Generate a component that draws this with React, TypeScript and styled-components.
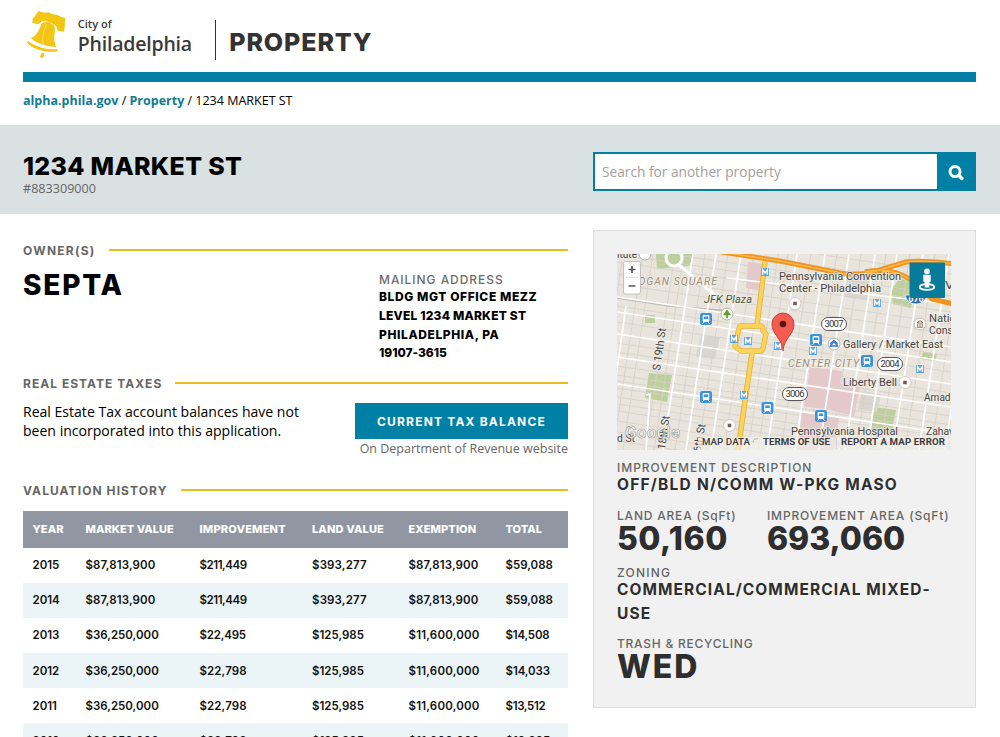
import React from "react";
import styled, { createGlobalStyle } from "styled-components";

const GlobalStyle = createGlobalStyle`
  * { box-sizing: border-box; }
  body { margin: 0; background: #fff; color: #000; font-family: "Open Sans", sans-serif; }
  h1, h2, p { margin: 0; }
`;

const heading = `font-family: Inter, sans-serif; font-weight: 700; white-space: nowrap;`;

const Page = styled.div`
  width: 1000px;
  height: 737px;
  overflow: hidden;
`;
const Header = styled.header`
  margin: 0 24.5px 0 23px;
  height: 125px;
`;
const Brand = styled.div`
  height: 72px;
  display: flex;
  align-items: flex-start;
  padding: 10px 0 0 3px;
`;
const CityName = styled.div`
  margin: 6px 0 0 11px;
  width: 137px;
  color: #3a3a3a;
  font-weight: 600;
  white-space: nowrap;
`;
const CitySmall = styled.div`
  font-size: 11px;
  line-height: 16px;
  letter-spacing: 0.05px;
`;
const CityLarge = styled.div`
  font-size: 19.5px;
  line-height: 24px;
  letter-spacing: -0.2px;
`;
const AppTitle = styled.div`
  ${heading}
  margin-top: 9.5px;
  height: 40px;
  border-left: 1px solid #333;
  padding-left: 13.5px;
  font-size: 25px;
  font-weight: 800;
  line-height: 44px;
  letter-spacing: 0.9px;
  color: #333;
`;
const Bar = styled.div`
  height: 10px;
  background: #0080a5;
`;
const Crumbs = styled.nav`
  font-size: 12.5px;
  line-height: 16px;
  padding-top: 11px;
  white-space: nowrap;
`;
const CrumbLink = styled.a`
  color: #0f7b93;
  font-weight: 700;
`;
const Band = styled.section`
  height: 89px;
  background: #dae1e3;
  border-top: 1px solid #d5d9da;
  padding: 26px 24.5px 0 23px;
  display: flex;
  justify-content: space-between;
`;
const Address = styled.h1`
  ${heading}
  margin-top: -1px;
  font-size: 25px;
  line-height: 31px;
  font-weight: 800;
  letter-spacing: 0.3px;
`;
const Account = styled.div`
  color: #666;
  font-size: 12.6px;
  line-height: 14px;
`;
const Search = styled.form`
  display: flex;
  width: 382.5px;
  height: 39px;
`;
const Input = styled.input`
  flex: 1;
  min-width: 0;
  border: 2px solid #0080a5;
  background: #fff;
  padding: 0 7px;
  font: 13.7px "Open Sans", sans-serif;
  outline: 0;
  &::placeholder { color: #a0a0a0; opacity: 1; }
`;
const SearchButton = styled.button`
  display: flex;
  align-items: center;
  width: 37px;
  border: 0;
  padding: 2px 0 0 8px;
  background: #0080a5;
`;
const Content = styled.main`
  display: grid;
  grid-template-columns: 545px 382.5px;
  justify-content: space-between;
  padding: 16px 24.5px 0 23px;
`;
const SectionTitle = styled.h2<{ $ls: number }>`
  ${heading}
  display: flex;
  align-items: center;
  gap: 13px;
  color: #666;
  font-size: 12px;
  line-height: 18px;
  padding-top: 1px;
  margin-bottom: -1px;
  letter-spacing: ${(p) => p.$ls}px;
  &::after {
    content: "";
    flex: 1;
    height: 2px;
    margin-bottom: 2px;
    background: #efbb1c;
  }
`;
const Owners = styled.section`
  padding-top: 11px;
  height: 144px;
`;
const OwnerRow = styled.div`
  display: grid;
  grid-template-columns: 356px 1fr;
`;
const OwnerName = styled.div`
  ${heading}
  padding-top: 9px;
  font-size: 28px;
  line-height: 34px;
  font-weight: 800;
  letter-spacing: 1.8px;
`;
const Mailing = styled.address`
  ${heading}
  font-style: normal;
  padding-top: 12px;
  font-size: 12px;
  font-weight: 800;
  line-height: 18.6px;
`;
const MailingLabel = styled.div`
  color: #6c6c6c;
  font-weight: 500;
  letter-spacing: 0.95px;
  line-height: 17.4px;
`;
const AddressLine = styled.div<{ $ls: number }>`
  letter-spacing: ${(p) => p.$ls}px;
`;
const Taxes = styled.section`
  height: 107px;
`;
const TaxRow = styled.div`
  display: flex;
  justify-content: space-between;
  padding-top: 11px;
`;
const TaxText = styled.p`
  font-size: 14.05px;
  line-height: 18.6px;
  white-space: nowrap;
`;
const TaxAction = styled.div`
  width: 213px;
  text-align: right;
  color: #666;
  font-size: 12.5px;
  line-height: 20px;
  white-space: nowrap;
`;
const TaxButton = styled.button`
  ${heading}
  width: 213px;
  height: 36px;
  border: 0;
  padding: 0;
  background: #0080a5;
  color: #fff;
  font-size: 12px;
  letter-spacing: 1.2px;
  display: block;
`;
const Table = styled.table`
  ${heading}
  margin-top: 11.5px;
  width: 545px;
  table-layout: fixed;
  border-collapse: collapse;
  font-size: 11.5px;
`;
const HeadCell = styled.th<{ $w: number; $ls: number }>`
  width: ${(p) => p.$w}px;
  height: 37px;
  padding: 0 0 0 9.5px;
  text-align: left;
  background: #9097a3;
  color: #fff;
  font-weight: 800;
  font-size: 11px;
  letter-spacing: ${(p) => p.$ls}px;
`;
const Row = styled.tr`
  height: 35.1px;
  &:nth-child(even) { background: #ebf4f7; }
`;
const Cell = styled.td<{ $ls: number }>`
  padding: 0.5px 0 0 9.5px;
  color: #111;
  font-weight: 600;
  letter-spacing: ${(p) => p.$ls}px;
`;
const Card = styled.aside`
  height: 478px;
  background: #f1f1f1;
  border: 1px solid #dedede;
  padding: 23px 23px 0 23px;
`;
const MapFrame = styled.svg`
  display: block;
  width: 334px;
  height: 196px;
  font-family: Roboto, sans-serif;
`;
const Label = styled.div<{ $ls: number }>`
  ${heading}
  color: #666;
  font-weight: 500;
  font-size: 12px;
  line-height: 17px;
  letter-spacing: ${(p) => p.$ls}px;
`;
const Value = styled.div<{ $ls: number }>`
  ${heading}
  margin: -2.5px 0 2.5px;
  color: #2e2e2e;
  font-size: 15.5px;
  line-height: 23.3px;
  letter-spacing: ${(p) => p.$ls}px;
`;
const Figure = styled.div<{ $ls: number }>`
  ${heading}
  color: #2e2e2e;
  font-size: 32px;
  font-weight: 800;
  line-height: 30px;
  letter-spacing: ${(p) => p.$ls}px;
`;
const Fact = styled.div<{ $top: number }>`
  padding-top: ${(p) => p.$top}px;
`;
const Areas = styled.div`
  display: grid;
  grid-template-columns: 150px 1fr;
`;

const Bell = () => (
  <svg width="40.7" height="48.3" viewBox="18 15 122 145" fill="#f3c613">
    <path d="M56 18l17 5 12-1 14 6 14 2 11 6 13 4-3 16 1 3-3 21-19-3-3-12-5-4-9-2-6-6-14-5-11 1-6 6-6 3-16-5 1-12 5-6z" />
    <path d="M67 53c8-5 28-1 34 7 8 12 0 29 2 46l5 20c-24 0-58-11-76-26 22-8 25-32 35-47z" />
    <path d="M24 108c22 17 57 28 88 24l1 7c-32 6-71-4-92-26z" />
    <path d="M66 143l7 2-1 9-6 6-6-5z" />
    <path d="M80 59c-10 18-14 38-10 61" fill="none" stroke="#fff" strokeWidth="1.8" opacity=".6" />
    <path d="M66 49l10 3M92 54l9 6" fill="none" stroke="#fff" strokeWidth="2.5" opacity=".8" />
  </svg>
);

const Magnifier = () => (
  <svg width="18" height="18" viewBox="0 0 18 18" fill="none" stroke="#fff" strokeWidth="3">
    <circle cx="8" cy="7.6" r="5" />
    <path d="M11.7 11.3l3.2 3.2" strokeWidth="3.4" strokeLinecap="round" />
  </svg>
);

const Transit = ({ x, y }: { x: number; y: number }) => (
  <g transform={`translate(${x} ${y})`}>
    <rect x="-6" y="-6" width="12" height="12" rx="2.2" fill="#3b93dc" />
    <rect x="-3.3" y="-4" width="6.6" height="7" rx="1.2" fill="#fff" />
    <rect x="-2.2" y="-2.5" width="4.4" height="2.5" fill="#3b93dc" />
    <path d="M-2 3l-1.5 1.8M2 3l1.5 1.8" stroke="#fff" />
  </g>
);
const Metro = ({ x, y }: { x: number; y: number }) => (
  <g transform={`translate(${x} ${y})`}>
    <rect x="-4" y="-4" width="8" height="8" fill="#5ba6e2" />
    <path d="M-2.4 2.7v-5L0 1l2.4-3.3v5" fill="none" stroke="#fff" strokeWidth="1.4" />
  </g>
);
const Poi = ({ x, y }: { x: number; y: number }) => (
  <g transform={`translate(${x} ${y})`}>
    <circle r="6" fill="#fff" stroke="#c5bcb4" strokeWidth=".8" />
    <rect x="-1.8" y="-1.8" width="3.6" height="3.6" fill="#7b5b50" />
  </g>
);
const Shield = ({ x, y, n }: { x: number; y: number; n: string }) => (
  <g>
    <rect x={x - 12.5} y={y - 6.5} width="25" height="13" rx="6.5" fill="#fff" stroke="#555" />
    <text x={x} y={y + 3.4} textAnchor="middle" fontSize="9.5" fill="#333" textLength="19">{n}</text>
  </g>
);
const Place = ({ x, y, w, children }: { x: number; y: number; w: number; children: string }) => (
  <text x={x} y={y} textLength={w} lengthAdjust="spacingAndGlyphs" fontSize="11" fill="#454545" stroke="#f3efe8" strokeWidth="2" strokeOpacity=".75" paintOrder="stroke">
    {children}
  </text>
);

const avenues = [62, 85, 110, 166, 194, 218, 244, 266, 292, 318, 344, 366];
const lanes = [-8, 12, 22, 44, 53, 74, 97, 123, 134, 147, 157, 180, 206, 230, 255, 279, 304, 330, 355];
const streets = [43, 58, 80, 103, 130];
const alleys = [-30, -18, -8, 0, 8, 20, 30, 52, 68, 89, 98, 112, 121, 127, 134, 143, 150, 157, 167, 178, 187];

const StreetMap = () => (
  <MapFrame viewBox="0 0 334 196">
    <rect width="334" height="196" fill="#e9e5dd" />
    <path d="M39 0h38l-5 12-32 3zM28 61h10v8H28zM32 119l23 2-5 27-22-4zM282 25l18 2-6 27-18-4-3-12zM257 153l22 3-5 25-20-4zM306 98l14 2-2 7-14-2z" fill="#bccf9c" />
    <path d="M131 8l17 2-3 27-16-3zM193 113l32 4-6 40-32-5zM222 130l21 3-6 29-21-5zM185 158l37 6-5 32h-36z" fill="#e6c8ca" />
    <path d="M84 81l19 2-5 22-19-2zM245 137l19 3-4 18-19-2zM231 21l25 4-5 21-24-3z" fill="#d9d5cf" />
    <g stroke="#d6d1c9" strokeWidth=".9">
      {lanes.map((x) => <path key={x} d={`M${x + 14} 0L${x - 16} 196`} />)}
      {alleys.map((y) => <path key={y} d={`M0 ${y}L334 ${y + 50}`} />)}
    </g>
    <path d="M0 44l52 8 62 5" stroke="#bdb9b3" strokeWidth="1.5" fill="none" />
    <g stroke="#fff" strokeWidth="1.7">
      {avenues.map((x) => <path key={x} d={`M${x + 14} 0L${x - 16} 196`} />)}
      {streets.map((y) => <path key={y} d={`M0 ${y}L334 ${y + 50}`} />)}
      <path d="M9 52L-2 130M110 24L334 50M29 141l4-1-4 56" fill="none" />
    </g>
    <path d="M62 11l38 32" stroke="#fff" strokeWidth="3" />
    <circle cx="57" cy="4" r="8" fill="#bccf9c" stroke="#fff" strokeWidth="3" />
    <g fill="none" strokeLinejoin="round">
      <path d="M148 8l-8 64M123 72h21q2 0 2 5l3 3-3 14q-1 4-6 3h-16l-6-5 3-14zM135 99l-14 97" stroke="#e5b432" strokeWidth="5.4" />
      <path d="M148 8l-8 64M123 72h21q2 0 2 5l3 3-3 14q-1 4-6 3h-16l-6-5 3-14zM135 99l-14 97" stroke="#fbd25c" strokeWidth="3.8" />
      <path d="M98-3l65 10 50 10q22 6 43 1l33-10q15-2 50 2M248 18q24-6 47 8l20 19 22 5" stroke="#ef9422" strokeWidth="5" />
      <path d="M98-3l65 10 50 10q22 6 43 1l33-10q15-2 50 2M248 18q24-6 47 8" stroke="#ffb647" strokeWidth="1.5" />
    </g>
    <Place x={0} y={4} w={20}>itute</Place>
    <circle cx="28" cy="0" r="6" fill="#fff" stroke="#aaa" />
    <text x="15" y="31" textLength="85" fontSize="10.5" fontStyle="italic" fill="#9c917f" stroke="#f0ebe3" strokeWidth="2" paintOrder="stroke">LOGAN SQUARE</text>
    <text x="87" y="49" textLength="48" fontSize="11" fontStyle="italic" fill="#3d5844" stroke="#f0ebe3" strokeWidth="2" paintOrder="stroke">JFK Plaza</text>
    <text x="171" y="113" textLength="71" fontSize="10.5" fontStyle="italic" fill="#9c917f" stroke="#f0ebe3" strokeWidth="2" paintOrder="stroke">CENTER CITY</text>
    <Place x={162} y={25.5} w={122}>Pennsylvania Convention</Place>
    <Place x={162} y={38} w={102}>Center - Philadelphia</Place>
    <Place x={226} y={94} w={100}>Gallery / Market East</Place>
    <Place x={226} y={132} w={54}>Liberty Bell</Place>
    <Place x={312} y={68} w={33}>Nation</Place>
    <Place x={312} y={79.5} w={30}>Consti</Place>
    <Place x={307} y={147} w={32}>Amada</Place>
    <Place x={174} y={181} w={107}>Pennsylvania Hospital</Place>
    <Place x={309} y={181} w={28}>Zahav</Place>
    <Place x={328} y={35} w={12}>Vi</Place>
    <g transform="translate(43 117) rotate(-82)"><Place x={0} y={0} w={43}>S 19th St</Place></g>
    <g transform="translate(48 196) rotate(-82)"><Place x={-9} y={0} w={43}>S 18th St</Place></g>
    <g transform="translate(84 196) rotate(-80)"><Place x={-18} y={0} w={44}>S 16th St</Place></g>
    <Place x={0} y={188} w={18}>d St</Place>
    <Metro x={148} y={18} /><Metro x={117} y={85} /><Metro x={131} y={87} /><Metro x={161} y={92} />
    <Metro x={127} y={141} /><Metro x={260} y={49} /><Metro x={196} y={97} /><Metro x={303} y={115} />
    <Transit x={89} y={65} /><Transit x={89} y={143} /><Transit x={150.5} y={154} /><Transit x={199} y={86} />
    <Transit x={250} y={107} /><Transit x={204} y={162} />
    <Poi x={178} y={49.5} /><Poi x={288} y={128.5} /><Poi x={112.5} y={171.5} />
    <circle cx="110" cy="60" r="6" fill="#fff" stroke="#aeb5a4" />
    <path d="M110 56l3.5 5h-2.8v3h-1.4v-3h-2.8z" fill="#5f9b28" stroke="#5f9b28" strokeWidth=".6" />
    <circle cx="217" cy="90" r="6" fill="#fff" stroke="#aeb5c4" />
    <path d="M213.5 92l3.5-4.5 3.5 4.5zM214 92v-3l3-2.5 3 2.5v3" fill="none" stroke="#3979cf" strokeWidth="1.3" />
    <circle cx="303" cy="70" r="6" fill="#fff" stroke="#c0b8aa" />
    <path d="M300 69h6l-3-2.5zM300.8 70v2.5M303 70v2.5M305.2 70v2.5M299.7 73.2h6.6" fill="none" stroke="#8b6c45" />
    <Shield x={217} y={70} n="3007" /><Shield x={273} y={110} n="2004" /><Shield x={178} y={140} n="3006" />
    <path d="M288 41h22q-2 9-11 9t-11-9z" fill="#286bae" stroke="#fff" strokeWidth=".8" />
    <text x="299" y="48" textAnchor="middle" fontSize="9" fontWeight="700" fill="#fff">676</text>
    <path d="M166 97c-1-13-11-16-11-27a11 11 0 0 1 22 0c0 11-10 14-11 27z" fill="#f55b50" stroke="#a93a32" strokeWidth=".8" />
    <circle cx="166" cy="70" r="3.3" fill="#591710" />
    <g>
      <rect x="6.5" y="7.5" width="17" height="32.5" rx="2" fill="#fff" stroke="#b9b6b1" strokeWidth=".8" />
      <path d="M9 23.5h12" stroke="#ddd" />
      <path d="M11.5 15.5h7M15 12v7M11.5 32h7" stroke="#555" strokeWidth="1.7" />
    </g>
    <rect x="292.5" y="8.5" width="35.5" height="35.5" rx="1" fill="#087b9b" />
    <ellipse cx="310" cy="33" rx="7.3" ry="2.9" fill="none" stroke="#fff" strokeWidth="1.8" />
    <circle cx="310" cy="17.3" r="2.9" fill="#fff" />
    <path d="M306.3 20.8h7.4v6.7l-1.4 1v5h-4.6v-5l-1.4-1z" fill="#fff" />
    <text x="8" y="184" textLength="55" fontSize="17" fontWeight="500" fill="#fff" fillOpacity=".8" stroke="#999" strokeWidth=".6">Google</text>
    <rect x="81" y="183" width="253" height="13" fill="#f3f1ed" opacity=".65" />
    <g fontSize="9.7" fill="#3d3d3d">
      <text x="85" y="191.3" textLength="48" fontWeight="500">MAP DATA</text>
      <text x="146" y="191.3" textLength="67" fontWeight="700">TERMS OF USE</text>
      <text x="224" y="191.3" textLength="104" fontWeight="700">REPORT A MAP ERROR</text>
    </g>
    <path d="M141 185q-5-1-5 3.5" fill="none" stroke="#b5b1ad" />
    <path d="M219.5 184v11" stroke="#d5cfca" />
  </MapFrame>
);

const columns: [string, number, number][] = [
  ["YEAR", 53, 0.1], ["MARKET VALUE", 114, 0.05], ["IMPROVEMENT", 112.5, 0.2],
  ["LAND VALUE", 96.5, 0.15], ["EXEMPTION", 97, 0.1], ["TOTAL", 72, 0],
];
const history = [
  ["2015", "$87,813,900", "$211,449", "$393,277", "$87,813,900", "$59,088"],
  ["2014", "$87,813,900", "$211,449", "$393,277", "$87,813,900", "$59,088"],
  ["2013", "$36,250,000", "$22,495", "$125,985", "$11,600,000", "$14,508"],
  ["2012", "$36,250,000", "$22,798", "$125,985", "$11,600,000", "$14,033"],
  ["2011", "$36,250,000", "$22,798", "$125,985", "$11,600,000", "$13,512"],
  ["2010", "$36,250,000", "$22,798", "$125,985", "$11,600,000", "$13,225"],
];
const tracking: Record<string, number> = {
  "$87,813,900": 0.1, "$211,449": -0.45, "$393,277": 0.15, "$11,600,000": 0.2,
  "$22,495": -0.2, "$22,798": 0.1, "$13,512": -0.35, "$14,508": -0.2, "$14,033": -0.1,
};

export default function App() {
  return (
    <Page>
      <GlobalStyle />
      <Header>
        <Brand>
          <Bell />
          <CityName><CitySmall>City of</CitySmall><CityLarge>Philadelphia</CityLarge></CityName>
          <AppTitle>PROPERTY</AppTitle>
        </Brand>
        <Bar />
        <Crumbs><CrumbLink>alpha.phila.gov</CrumbLink> / <CrumbLink>Property</CrumbLink> / 1234 MARKET ST</Crumbs>
      </Header>
      <Band>
        <div><Address>1234 MARKET ST</Address><Account>#883309000</Account></div>
        <Search>
          <Input placeholder="Search for another property" />
          <SearchButton type="button" aria-label="Search"><Magnifier /></SearchButton>
        </Search>
      </Band>
      <Content>
        <div>
          <Owners>
            <SectionTitle $ls={1.25}>OWNER(S)</SectionTitle>
            <OwnerRow>
              <OwnerName>SEPTA</OwnerName>
              <Mailing>
                <MailingLabel>MAILING ADDRESS</MailingLabel>
                <AddressLine $ls={0.6}>BLDG MGT OFFICE MEZZ</AddressLine>
                <AddressLine $ls={0.2}>LEVEL 1234 MARKET ST</AddressLine>
                <AddressLine $ls={0.6}>PHILADELPHIA, PA</AddressLine>
                <AddressLine $ls={-0.05}>19107-3615</AddressLine>
              </Mailing>
            </OwnerRow>
          </Owners>
          <Taxes>
            <SectionTitle $ls={1.03}>REAL ESTATE TAXES</SectionTitle>
            <TaxRow>
              <TaxText>Real Estate Tax account balances have not<br />been incorporated into this application.</TaxText>
              <TaxAction><TaxButton>CURRENT TAX BALANCE</TaxButton>On Department of Revenue website</TaxAction>
            </TaxRow>
          </Taxes>
          <SectionTitle $ls={1.08}>VALUATION HISTORY</SectionTitle>
          <Table>
            <thead><tr>{columns.map(([t, w, ls]) => <HeadCell key={t} $w={w} $ls={ls}>{t}</HeadCell>)}</tr></thead>
            <tbody>
              {history.map((r) => <Row key={r[0]}>{r.map((v, i) => <Cell key={i} $ls={tracking[v] ?? 0}>{v}</Cell>)}</Row>)}
            </tbody>
          </Table>
        </div>
        <Card>
          <StreetMap />
          <Fact $top={8.5}><Label $ls={0.97}>IMPROVEMENT DESCRIPTION</Label><Value $ls={1.23}>OFF/BLD N/COMM W-PKG MASO</Value></Fact>
          <Areas>
            <Fact $top={8}><Label $ls={0.8}>LAND AREA (SqFt)</Label><Figure $ls={0.5}>50,160</Figure></Fact>
            <Fact $top={8}><Label $ls={0.85}>IMPROVEMENT AREA (SqFt)</Label><Figure $ls={-0.05}>693,060</Figure></Fact>
          </Areas>
          <Fact $top={10}><Label $ls={1.2}>ZONING</Label><Value $ls={1.07}>COMMERCIAL/COMMERCIAL MIXED-<br />USE</Value></Fact>
          <Fact $top={8}><Label $ls={0.75}>TRASH &amp; RECYCLING</Label><Figure $ls={1.9}>WED</Figure></Fact>
        </Card>
      </Content>
    </Page>
  );
}
